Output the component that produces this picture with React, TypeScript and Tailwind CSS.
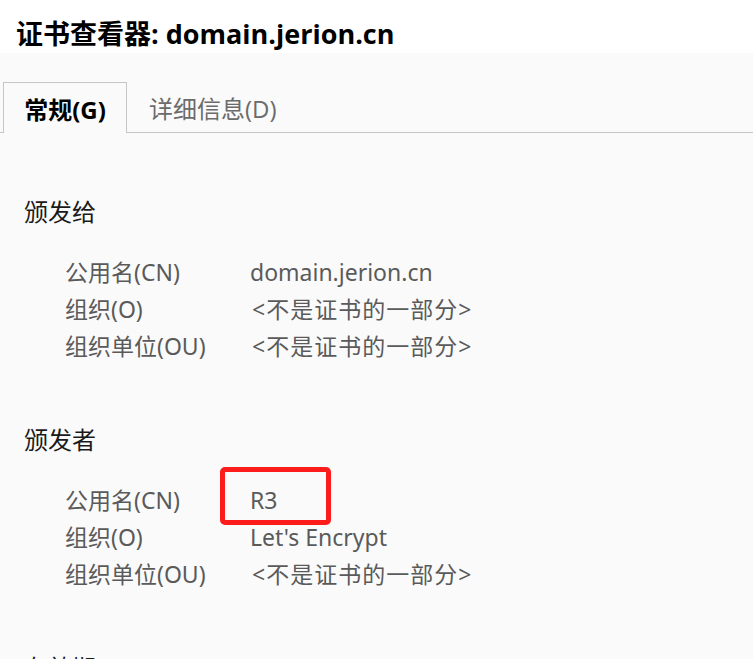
const FONT = "font-['Open_Sans','Noto_Sans_CJK_SC',sans-serif]";

type Row = { label: string; value: string; mark?: boolean };

const issuedTo: Row[] = [
  { label: '公用名(CN)', value: 'domain.jerion.cn' },
  { label: '组织(O)', value: '<不是证书的一部分>' },
  { label: '组织单位(OU)', value: '<不是证书的一部分>' },
];

const issuedBy: Row[] = [
  { label: '公用名(CN)', value: 'R3', mark: true },
  { label: '组织(O)', value: "Let's Encrypt" },
  { label: '组织单位(OU)', value: '<不是证书的一部分>' },
];

function Section({ title, rows, first }: { title: string; rows: Row[]; first?: boolean }) {
  return (
    <div className={first ? 'mt-[61px]' : 'mt-[57px]'}>
      <h2 className="pl-6 text-[24px] leading-[36px] text-[#1a1a1a]">{title}</h2>
      <div className="mt-[24px]">
        {rows.map((r) => (
          <div
            key={r.label}
            className="relative flex h-[37px] items-center pl-[65px] font-['Noto_Sans','Noto_Sans_CJK_SC',sans-serif] text-[23px] text-[#5a5a5a]"
          >
            <span className="w-[185px] shrink-0">{r.label}</span>
            <span className={r.value.startsWith('<') ? 'pl-[2px] tracking-[1px]' : ''}>{r.value}</span>
            {r.mark && (
              <div className="absolute left-[220px] top-[-15px] h-[58px] w-[111px] rounded-[5px] border-[5px] border-[#fd1c1c]" />
            )}
          </div>
        ))}
      </div>
    </div>
  );
}

export default function App() {
  return (
    <div className={`h-[659px] w-[753px] overflow-hidden bg-[#fafafa] ${FONT}`}>
      <div className="flex h-[53px] items-end bg-white pb-[1px] pl-4">
        <h1 className="text-[27px] font-bold leading-[36px] text-black">证书查看器: domain.jerion.cn</h1>
      </div>

      <div className="mt-[29px] flex border-b border-[#c6c6c6]">
        <div className="ml-[3px] -mb-px flex h-[51px] w-[124px] items-center justify-center border border-b-0 border-[#c6c6c6] bg-[#fafafa] pt-1 text-[24px] font-bold text-black">
          常规(G)
        </div>
        <div className="flex h-[50px] items-center pl-[22px] pt-1 text-[24px] text-[#6b6b6b]">详细信息(D)</div>
      </div>

      <Section title="颁发给" rows={issuedTo} first />
      <Section title="颁发者" rows={issuedBy} />
      <div className="mt-[57px] pl-6 text-[24px] leading-[36px] text-[#1a1a1a]">有效期</div>
    </div>
  );
}
